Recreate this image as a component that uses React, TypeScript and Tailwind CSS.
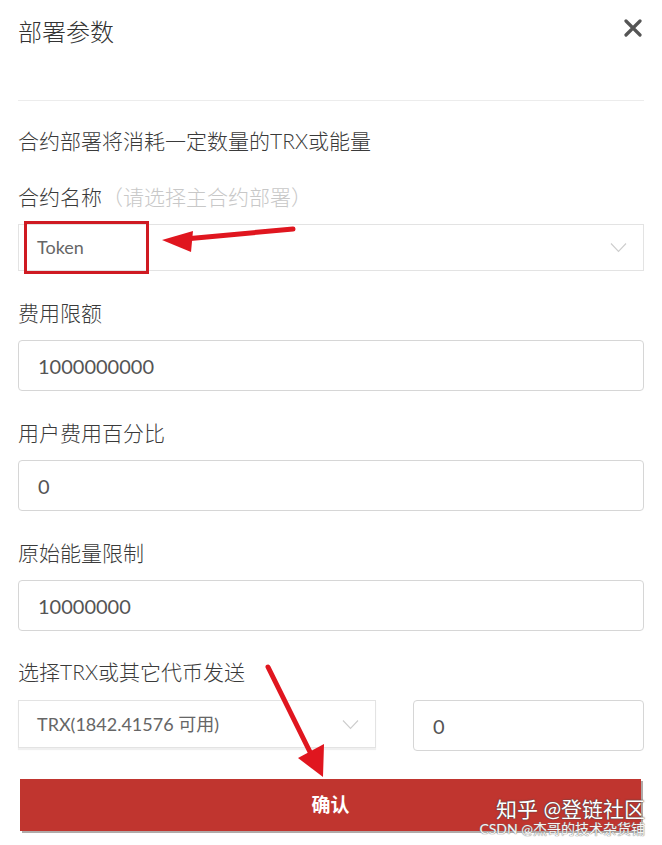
const font = "font-['Lato','Noto_Sans_CJK_SC',sans-serif]";

function Chevron() {
  return (
    <svg width="17" height="11" viewBox="0 0 17 11" fill="none">
      <path d="M1 1.5 L8.5 9.5 L16 1.5" stroke="#cdcdcd" strokeWidth="1.1" />
    </svg>
  );
}

function Field({ label, value }: { label: string; value: string }) {
  return (
    <div className="flex flex-col">
      <div className="text-[21px] leading-[28px] text-[#3a3a3a]">{label}</div>
      <div className="mt-[13px] h-[51px] rounded-[4px] border border-[#d6d6d6] flex items-center px-[19px] text-[20px] text-[#555] font-normal">
        {value}
      </div>
    </div>
  );
}

export default function App() {
  return (
    <div className={`relative w-[662px] h-[845px] bg-white overflow-hidden font-light ${font}`}>
      <div className="px-[18px]">
        <div className="h-[101px] border-b border-[#ececec] flex justify-between items-start pt-[15px]">
          <div className="text-[24px] leading-[34px] text-[#333]">部署参数</div>
          <svg width="18" height="18" viewBox="0 0 18 18" className="mt-[4px] mr-[2px]">
            <path d="M2 2 L16 16 M16 2 L2 16" stroke="#555" strokeWidth="3.2" strokeLinecap="round" />
          </svg>
        </div>

        <div className="mt-[26px] text-[21px] leading-[28px] text-[#3a3a3a]">
          合约部署将消耗一定数量的TRX或能量
        </div>

        <div className="mt-[28px] flex flex-col">
          <div className="text-[21px] leading-[28px] text-[#3a3a3a]">
            合约名称<span className="text-[#c8c8c8]">（请选择主合约部署）</span>
          </div>
          <div className="mt-[13px] h-[47px] border border-[#e3e3e3] flex items-center justify-between pl-[18px] pr-[16px] text-[18px] text-[#666] font-normal">
            <span>Token</span>
            <Chevron />
          </div>
        </div>

        <div className="mt-[28px] flex flex-col gap-[28px]">
          <Field label="费用限额" value="1000000000" />
          <Field label="用户费用百分比" value="0" />
          <Field label="原始能量限制" value="10000000" />
        </div>

        <div className="mt-[27px] flex flex-col">
          <div className="text-[21px] leading-[28px] text-[#3a3a3a]">选择TRX或其它代币发送</div>
          <div className="mt-[14px] flex gap-[37px] items-start">
            <div className="w-[358px] h-[48px] border border-[#e3e3e3] shadow-[0_2px_1px_rgba(0,0,0,0.06)] flex items-center justify-between pl-[18px] pr-[16px] text-[18px] text-[#666] font-normal">
              <span>TRX(1842.41576 可用)</span>
              <Chevron />
            </div>
            <div className="flex-1 h-[51px] rounded-[4px] border border-[#d6d6d6] flex items-center px-[19px] text-[20px] text-[#555] font-normal">
              0
            </div>
          </div>
        </div>

        <div className="mt-[28px] ml-[2px] mr-[3px] h-[52px] bg-[#c0352f] shadow-[2px_2px_0_#b0aaa8] flex items-center justify-center text-white text-[19px] font-bold">
          确认
        </div>
      </div>

      {/* annotation overlays */}
      <div className="absolute left-[24px] top-[221px] w-[125px] h-[53px] border-[3px] border-[#cf1a22]" />
      <svg className="absolute left-0 top-0" width="662" height="845" viewBox="0 0 662 845">
        <path d="M293 229 L185 239" stroke="#e0161f" strokeWidth="5" strokeLinecap="round" />
        <path d="M162 240 L193 231 L191 252 Z" fill="#e0161f" />
        <path d="M268 667 L312 756" stroke="#e0161f" strokeWidth="5" strokeLinecap="round" />
        <path d="M323 777 L298 758 L324 744 Z" fill="#e0161f" />
      </svg>
      <div className="absolute right-[17px] top-[796px] text-[21px] leading-[26px] text-white font-normal [text-shadow:0_0_2px_#555,0_0_1px_#333]">
        知乎 @登链社区
      </div>
      <div className="absolute right-[17px] top-[821px] text-[14px] leading-[16px] text-[#f4f4f4] font-normal [text-shadow:0_0_1px_#777,0_0_1px_#777]">
        CSDN @杰哥的技术杂货铺
      </div>
    </div>
  );
}
